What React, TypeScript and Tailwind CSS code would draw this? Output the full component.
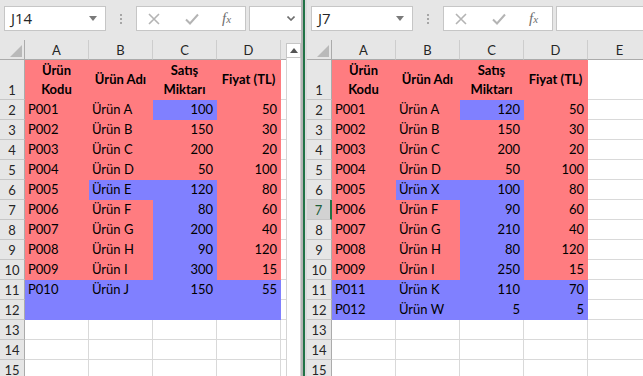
import React from 'react';

type Row = { cells: string[]; fill: string };

const leftRows: Row[] = [
  { cells: ['P001', 'Ürün A', '100', '50'], fill: 'ppbp' },
  { cells: ['P002', 'Ürün B', '150', '30'], fill: 'pppp' },
  { cells: ['P003', 'Ürün C', '200', '20'], fill: 'pppp' },
  { cells: ['P004', 'Ürün D', '50', '100'], fill: 'pppp' },
  { cells: ['P005', 'Ürün E', '120', '80'], fill: 'pbbp' },
  { cells: ['P006', 'Ürün F', '80', '60'], fill: 'ppbp' },
  { cells: ['P007', 'Ürün G', '200', '40'], fill: 'ppbp' },
  { cells: ['P008', 'Ürün H', '90', '120'], fill: 'ppbp' },
  { cells: ['P009', 'Ürün I', '300', '15'], fill: 'ppbp' },
  { cells: ['P010', 'Ürün J', '150', '55'], fill: 'bbbb' },
  { cells: ['', '', '', ''], fill: 'bbbb' },
  { cells: ['', '', '', ''], fill: 'wwww' },
  { cells: ['', '', '', ''], fill: 'wwww' },
  { cells: ['', '', '', ''], fill: 'wwww' },
];

const rightRows: Row[] = [
  { cells: ['P001', 'Ürün A', '120', '50'], fill: 'ppbp' },
  { cells: ['P002', 'Ürün B', '150', '30'], fill: 'pppp' },
  { cells: ['P003', 'Ürün C', '200', '20'], fill: 'pppp' },
  { cells: ['P004', 'Ürün D', '50', '100'], fill: 'pppp' },
  { cells: ['P005', 'Ürün X', '100', '80'], fill: 'pbbp' },
  { cells: ['P006', 'Ürün F', '90', '60'], fill: 'ppbp' },
  { cells: ['P007', 'Ürün G', '210', '40'], fill: 'ppbp' },
  { cells: ['P008', 'Ürün H', '80', '120'], fill: 'ppbp' },
  { cells: ['P009', 'Ürün I', '250', '15'], fill: 'ppbp' },
  { cells: ['P011', 'Ürün K', '110', '70'], fill: 'bbbb' },
  { cells: ['P012', 'Ürün W', '5', '5'], fill: 'bbbb' },
  { cells: ['', '', '', ''], fill: 'wwww' },
  { cells: ['', '', '', ''], fill: 'wwww' },
  { cells: ['', '', '', ''], fill: 'wwww' },
];

const fillClass = (f: string) =>
  f === 'p'
    ? 'bg-[#ff7c80] border-[#ff7c80]'
    : f === 'b'
      ? 'bg-[#8080ff] border-[#8080ff]'
      : 'bg-white border-[#d9d9d9]';

const NameBox = ({ value }: { value: string }) => (
  <div className="ml-[4px] flex h-[25px] w-[102px] shrink-0 items-center justify-between border border-[#c6c6c6] bg-white pl-[6px] pr-[8px]">
    <span className="font-['Open_Sans',sans-serif] text-[15px] leading-none text-[#262626]">{value}</span>
    <svg width="8" height="5" viewBox="0 0 8 5">
      <path d="M0 0h8L4 5z" fill="#7a7a7a" />
    </svg>
  </div>
);

const FormulaBar = ({ name, chevron }: { name: string; chevron: boolean }) => (
  <div className="flex h-[40px] shrink-0 items-start overflow-hidden pt-[6px]">
    <NameBox value={name} />
    <div className="flex h-[25px] w-[30px] shrink-0 flex-col items-center justify-center gap-[2px]">
      <span className="h-[2px] w-[2px] bg-[#a6a6a6]" />
      <span className="h-[2px] w-[2px] bg-[#a6a6a6]" />
      <span className="h-[2px] w-[2px] bg-[#a6a6a6]" />
    </div>
    <div className="flex h-[25px] w-[110px] shrink-0 items-center border border-[#c6c6c6] bg-white">
      <svg className="ml-[11px]" width="12" height="12" viewBox="0 0 12 12">
        <path d="M1 1l10 10M11 1L1 11" stroke="#b4b4b4" strokeWidth="1.6" />
      </svg>
      <svg className="ml-[25px]" width="14" height="12" viewBox="0 0 14 12">
        <path d="M1 6.5l4 4L13 1.5" stroke="#b4b4b4" strokeWidth="2" fill="none" />
      </svg>
      <span className="ml-[23px] font-['Liberation_Serif',serif] text-[15px] italic leading-none text-[#6e6e6e]">
        f<span className="text-[11px]">x</span>
      </span>
    </div>
    <div className="ml-[3px] flex h-[25px] w-[120px] shrink-0 items-center justify-end border border-[#c6c6c6] bg-white pr-[73px]">
      {chevron && (
        <svg width="8" height="5" viewBox="0 0 8 5">
          <path d="M0.5 0.5L4 4l3.5-3.5" stroke="#6e6e6e" strokeWidth="1.6" fill="none" />
        </svg>
      )}
    </div>
  </div>
);

const ColumnHeaders = ({ letters }: { letters: string[] }) => (
  <div className="flex h-[20px] shrink-0">
    <div className="flex h-[20px] w-[25px] shrink-0 items-end justify-end border-r border-b border-[#ababab] bg-[#e6e6e6] pb-[2px] pr-[2px]">
      <svg width="12" height="12" viewBox="0 0 12 12">
        <path d="M12 0v12H0z" fill="#b9b9b9" />
      </svg>
    </div>
    {letters.map((l) => (
      <div
        key={l}
        className="flex h-[20px] w-[64px] shrink-0 items-end justify-center border-r border-b border-r-[#cdcdcd] border-b-[#ababab] bg-[#e6e6e6] pb-[2px] text-[13px] leading-none text-[#262626]"
      >
        {l}
      </div>
    ))}
  </div>
);

const RowHeader = ({ n, h, active }: { n: number; h: string; active?: boolean }) => (
  <div
    className={`flex ${h} w-[25px] shrink-0 items-end justify-center border-b pb-[2px] text-[13px] leading-none ${
      active
        ? 'border-r-2 border-r-[#217346] border-b-[#c6c6c6] bg-[#d2d2d2] text-[#1e5e3a]'
        : 'border-r border-r-[#ababab] border-b-[#c6c6c6] bg-[#e6e6e6] text-[#262626]'
    }`}
  >
    {n}
  </div>
);

const Sheet = ({ rows, extra, activeRow }: { rows: Row[]; extra: boolean; activeRow?: number }) => (
  <div className="flex flex-col font-['Lato',sans-serif]">
    <ColumnHeaders letters={['A', 'B', 'C', 'D', 'E']} />
    <div className="flex h-[40px] shrink-0">
      <RowHeader n={1} h="h-[40px]" />
      {[['Ürün', 'Kodu'], ['Ürün Adı'], ['Satış', 'Miktarı'], ['Fiyat (TL)']].map((t, i) => (
        <div
          key={i}
          className="flex h-[40px] w-[64px] shrink-0 flex-col items-center justify-center border-r border-b border-[#ff7c80] bg-[#ff7c80] text-[13px] font-bold leading-[19px] text-black"
        >
          {t.map((line) => (
            <span key={line}>{line}</span>
          ))}
        </div>
      ))}
      <div className="h-[40px] w-[64px] shrink-0 border-r border-b border-[#d9d9d9] bg-white" />
    </div>
    {rows.map((r, i) => (
      <div key={i} className="flex h-[20px] shrink-0">
        <RowHeader n={i + 2} h="h-[20px]" active={activeRow === i + 2} />
        {r.cells.map((c, j) => (
          <div
            key={j}
            className={`flex h-[20px] w-[64px] shrink-0 items-end border-r border-b px-[3px] pb-[3px] text-[13px] leading-none text-black ${fillClass(
              r.fill[j],
            )} ${j >= 2 ? 'justify-end' : 'justify-start'}`}
          >
            {c}
          </div>
        ))}
        {extra && <div className="h-[20px] w-[64px] shrink-0 border-r border-b border-[#d9d9d9] bg-white" />}
      </div>
    ))}
  </div>
);

export default function App() {
  return (
    <div className="flex h-[376px] w-[643px] overflow-hidden bg-[#e6e6e6]">
      <div className="flex w-[301px] shrink-0 flex-col">
        <FormulaBar name="J14" chevron />
        <div className="flex min-h-0 flex-1">
          <div className="w-[286px] shrink-0 overflow-hidden">
            <Sheet rows={leftRows} extra />
          </div>
          <div className="flex w-[15px] shrink-0 flex-col pt-[3px]">
            <div className="flex h-[15px] items-center justify-center border border-[#c6c6c6] bg-white">
              <svg width="8" height="5" viewBox="0 0 8 5">
                <path d="M4 0l4 5H0z" fill="#555" />
              </svg>
            </div>
            <div className="flex-1 border-x border-[#d4d4d4] bg-white" />
          </div>
        </div>
      </div>
      <div className="flex w-[6px] shrink-0">
        <div className="w-[2px] bg-[#b4b4b4]" />
        <div className="w-[2px] bg-[#217346]" />
        <div className="w-[2px] bg-[#dcdcdc]" />
      </div>
      <div className="flex min-w-0 flex-1 flex-col overflow-hidden">
        <FormulaBar name="J7" chevron={false} />
        <div className="overflow-hidden">
          <Sheet rows={rightRows} extra activeRow={7} />
        </div>
      </div>
    </div>
  );
}
